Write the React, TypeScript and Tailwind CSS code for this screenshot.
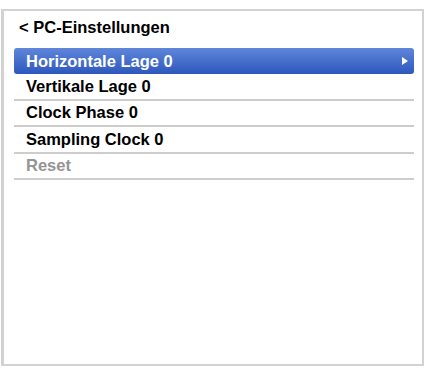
const items = [
  { label: 'Horizontale Lage 0', active: true },
  { label: 'Vertikale Lage 0' },
  { label: 'Clock Phase 0' },
  { label: 'Sampling Clock 0' },
  { label: 'Reset', disabled: true },
];

export default function App() {
  return (
    <div
      className="w-[425px] h-[368px] bg-white pt-[9px] pl-[1px] pr-[1px] pb-[2px]"
      style={{ fontFamily: '"Liberation Sans", Arial, sans-serif' }}
    >
      <div className="h-full border-2 border-l-[3px] border-[#d2d2d2] bg-white">
        <h1 className="pl-[15px] pt-[6px] text-[16.5px] leading-[20px] font-bold text-black">
          &lt; PC-Einstellungen
        </h1>

        <ul className="mt-[11px] ml-[10px] mr-[8px]">
          {items.map((item) =>
            item.active ? (
              <li
                key={item.label}
                className="h-[26px] flex items-center justify-between pl-[12px] pr-[6px] rounded-[3px] bg-gradient-to-b from-[#5f86da] to-[#2d57bd] text-white text-[16.5px] font-bold"
              >
                <span>{item.label}</span>
                <svg width="6" height="8" viewBox="0 0 6 8" aria-hidden="true">
                  <path d="M0 0 L6 4 L0 8 Z" fill="#ffffff" />
                </svg>
              </li>
            ) : (
              <li
                key={item.label}
                className={`h-[26.5px] flex items-center pl-[12px] border-b-2 border-[#cdcdcd] text-[16.5px] font-bold ${
                  item.disabled ? 'text-[#949494]' : 'text-black'
                }`}
              >
                {item.label}
              </li>
            )
          )}
        </ul>
      </div>
    </div>
  );
}
